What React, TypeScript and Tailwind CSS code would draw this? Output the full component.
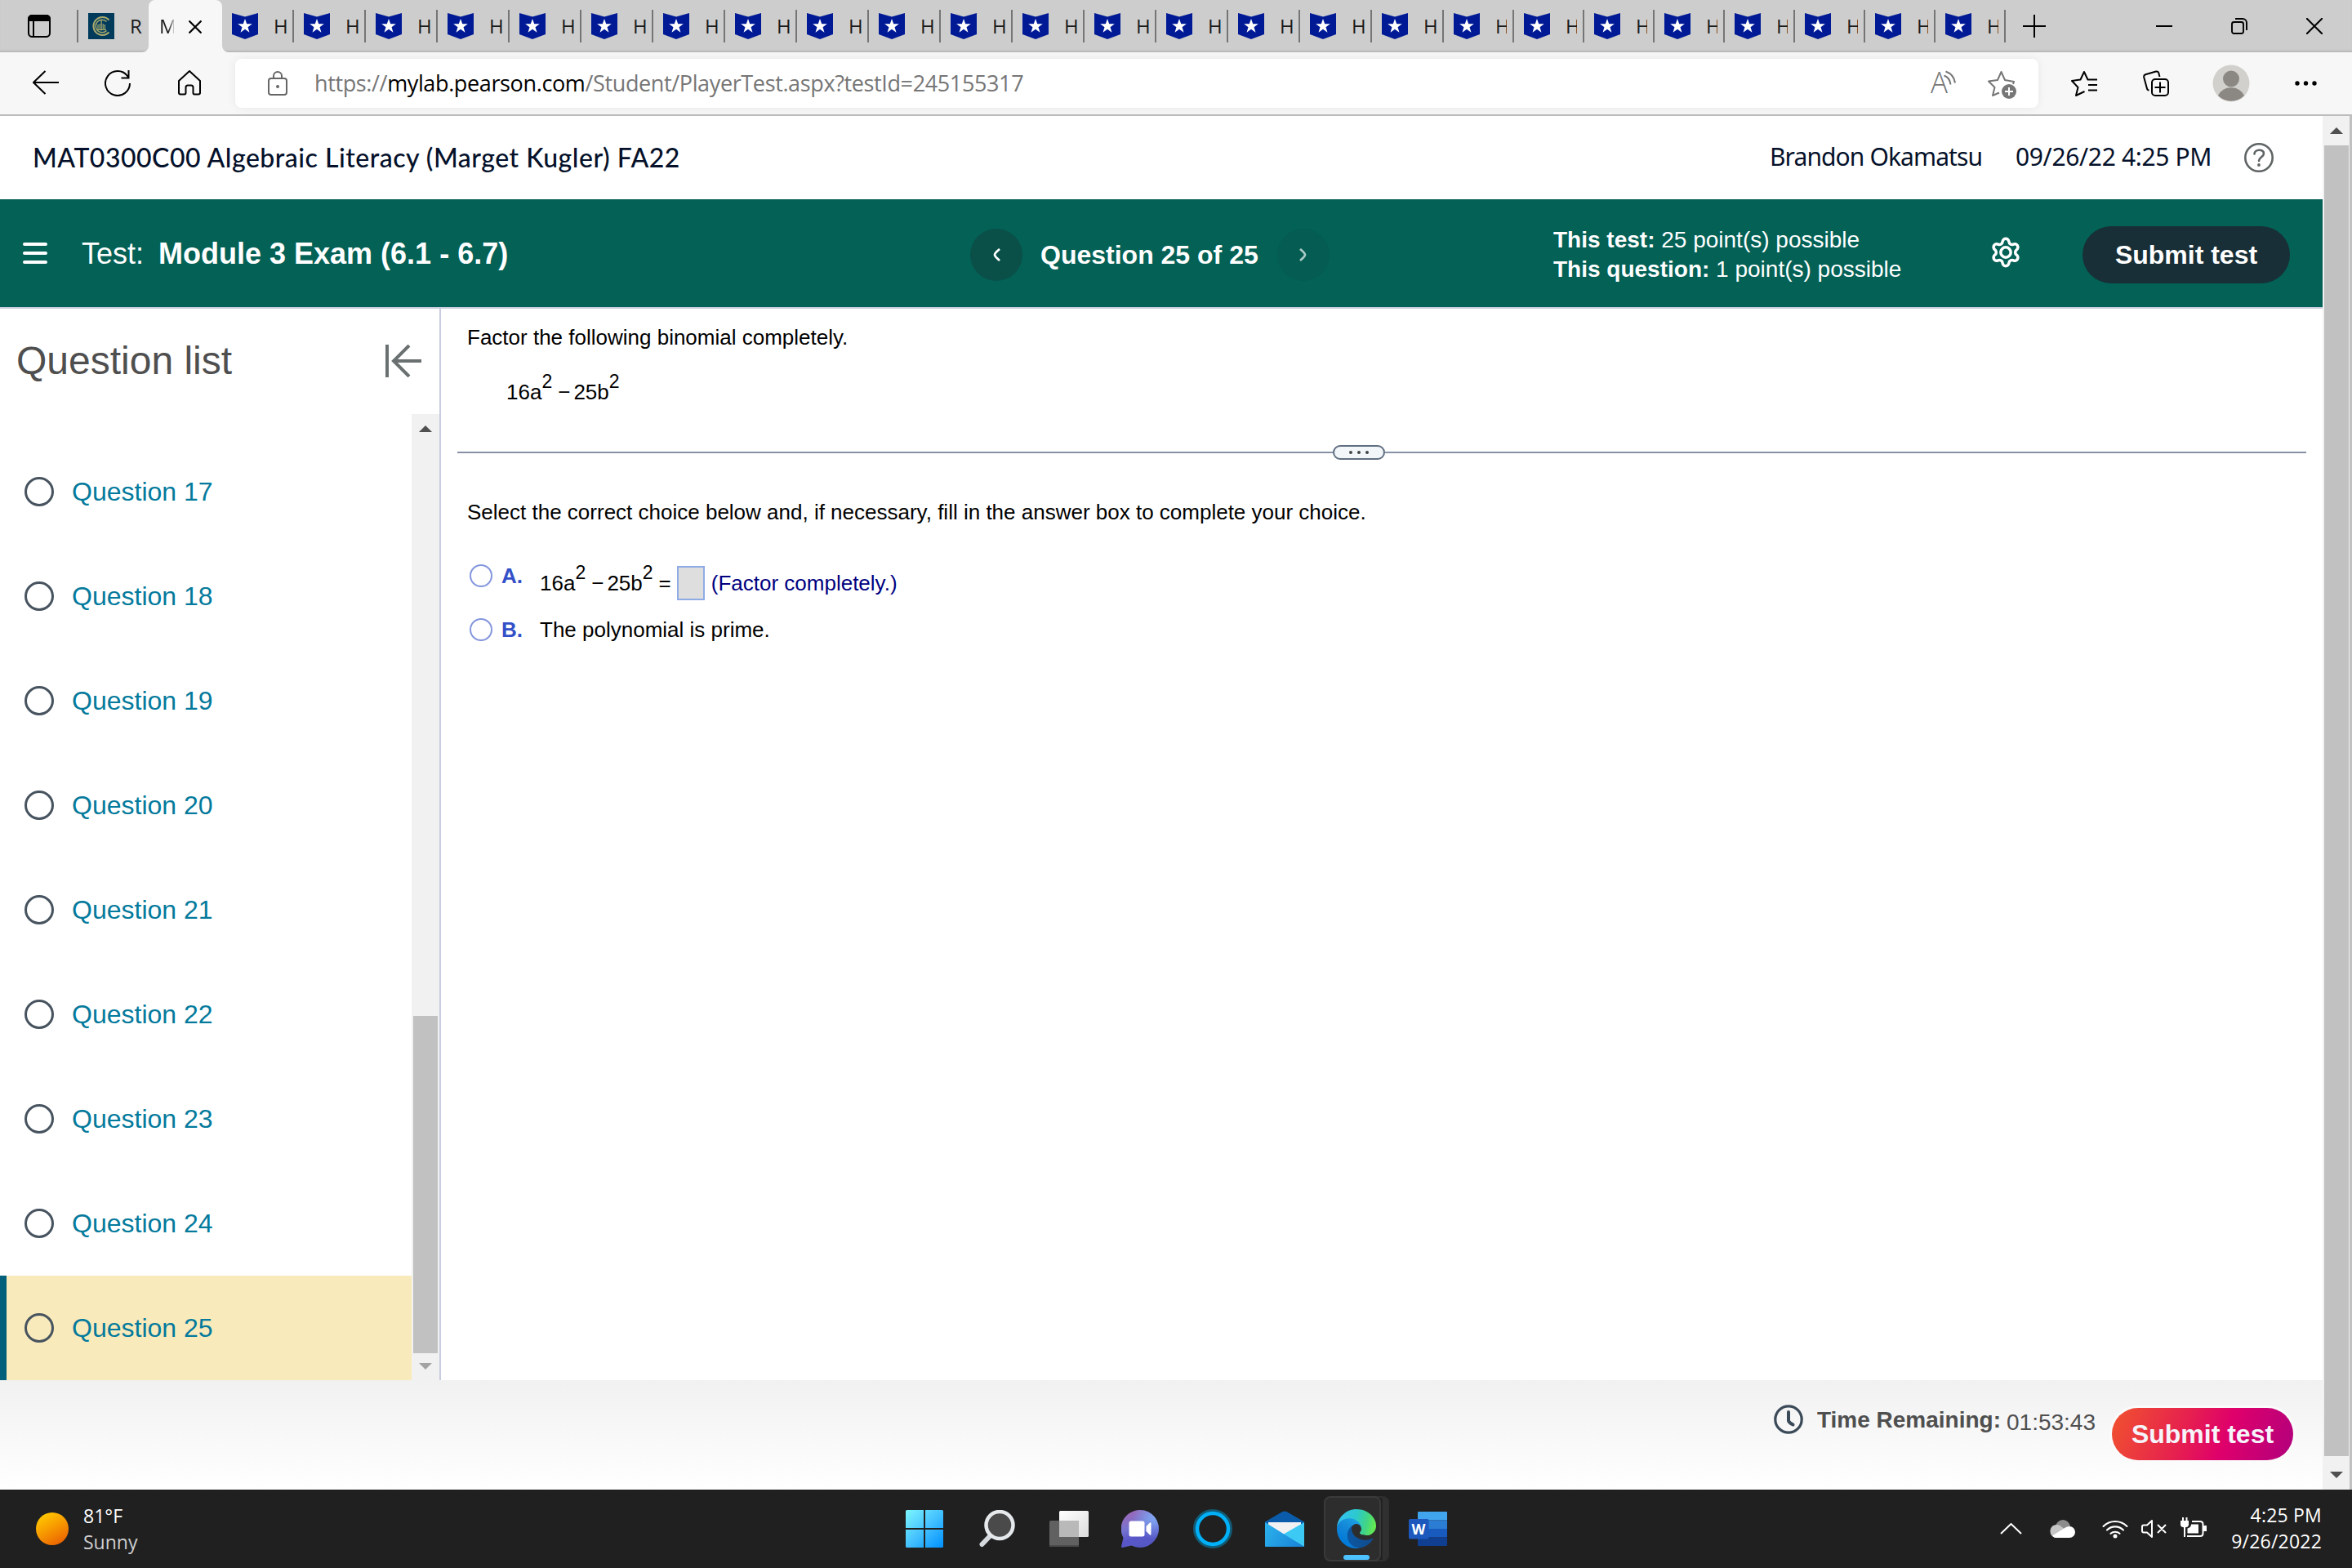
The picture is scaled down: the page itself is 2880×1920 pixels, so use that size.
import type { ReactNode } from 'react'
import { clsx } from 'clsx'

const wideTabs = Array.from({ length: 17 }, (_, i) => i)
const narrowTabs = Array.from({ length: 8 }, (_, i) => i)
const questions = [17, 18, 19, 20, 21, 22, 23, 24, 25]
const currentQuestion = 25

function HomeworkIcon() {
  return (
    <svg className="h-8 w-8 shrink-0" viewBox="0 0 32 32">
      <path d="M0 0L16 4.5L32 0V26L16 32L0 26Z" fill="#001a96" />
      <path
        d="M16 7l2.2 6.2h6.6l-5.3 4 2 6.6-5.5-4-5.5 4 2-6.600-5.300-4h6.600z"
        fill="#fff"
      />
    </svg>
  )
}

function HomeworkTab({ narrow = false }: { narrow?: boolean }) {
  return (
    <div className={clsx('flex h-full items-center pl-3', narrow ? 'w-[86px]' : 'w-[88px]')}>
      <HomeworkIcon />
      <span
        className={clsx(
          'ml-[19px] overflow-hidden font-["Open_Sans",sans-serif] text-[24px] leading-8 text-[#1b1b1b]',
          narrow ? 'w-[14px]' : 'w-[16px]',
        )}
      >
        H
      </span>
      <span className="ml-auto h-10 w-0.5 bg-[#757575]" />
    </div>
  )
}

function CollegeIcon() {
  return (
    <svg className="ml-3 h-8 w-8 shrink-0" viewBox="0 0 32 32">
      <rect width="32" height="32" fill="#003b5c" />
      <g fill="none" stroke="#a8a96d">
        <path d="M25.500 8.500A11 11 0 1 0 25.500 23.500" strokeWidth="2" />
        <path d="M22.500 10.500A7.800 7.800 0 1 0 22.500 21.500" strokeWidth="1.500" />
        <path d="M12 20v-6M14.200 21v-8M16.200 21.500V9M18.200 21v-8M20.400 20v-6M11 20.500h11" strokeWidth="1.200" />
      </g>
    </svg>
  )
}

function TabStrip() {
  return (
    <div className="flex h-16 bg-[#cdcdcd] shadow-[inset_0_-3px_3px_-2px_#a9a9a9]">
      <div className="flex h-full w-[96px] items-center pl-[34px]">
        <svg className="h-7 w-7" viewBox="0 0 28 28">
          <rect x="1" y="1" width="26" height="26" rx="4.5" fill="none" stroke="#000" strokeWidth="2" />
          <path d="M0 8V5a5 5 0 0 1 5-5h18a5 5 0 0 1 5 5v3z" />
          <path d="M7 8v19" stroke="#000" strokeWidth="2" />
        </svg>
        <span className="ml-auto h-10 w-0.5 bg-[#757575]" />
      </div>
      <div className="flex h-full w-[86px] items-center">
        <CollegeIcon />
        <span className="ml-[19px] font-['Open_Sans',sans-serif] text-[24px] leading-8 text-[#1b1b1b]">R</span>
      </div>
      <div className="relative flex h-full w-[90px] items-center">
        <svg className="absolute -left-2 top-0 h-16 w-[106px]" viewBox="0 0 106 64">
          <path d="M0 64a8 8 0 0 0 8-8V8a8 8 0 0 1 8-8h74a8 8 0 0 1 8 8v48a8 8 0 0 0 8 8z" fill="#f7f7f7" />
        </svg>
        <span className="relative ml-[13px] w-[18px] overflow-hidden bg-linear-to-r from-[#1b1b1b] from-60% to-[#bbb] bg-clip-text font-['Open_Sans',sans-serif] text-[24px] leading-8 text-transparent">
          M
        </span>
        <svg className="relative ml-[18px] mt-0.5 h-4 w-4" viewBox="0 0 16 16">
          <path d="M.5.5l15 15M15.500.5l-15 15" stroke="#000" strokeWidth="2.200" />
        </svg>
      </div>
      {wideTabs.map((i) => (
        <HomeworkTab key={i} />
      ))}
      {narrowTabs.map((i) => (
        <HomeworkTab key={i} narrow />
      ))}
      <div className="flex h-full flex-1 items-center pl-[21px]">
        <svg className="h-7 w-7" viewBox="0 0 28 28">
          <path d="M14 0v28M0 14h28" stroke="#000" strokeWidth="2" />
        </svg>
        <svg className="ml-[135px] h-5 w-5" viewBox="0 0 20 20">
          <path d="M0 10h20" stroke="#000" strokeWidth="2" />
        </svg>
        <svg className="ml-[72px] h-5 w-5" viewBox="0 0 20 20" fill="none" stroke="#000" strokeWidth="1.900">
          <rect x="1" y="5" width="14" height="14" rx="2.500" />
          <path d="M5 1h9a5 5 0 0 1 5 5v9" />
        </svg>
        <svg className="ml-[72px] h-5 w-5" viewBox="0 0 20 20">
          <path d="M0 0l20 20M20 0L0 20" stroke="#000" strokeWidth="2" />
        </svg>
      </div>
    </div>
  )
}

function Toolbar() {
  return (
    <div className="flex h-[78px] items-center border-b-2 border-[#bcbcbc] bg-[#f7f7f7]">
      <svg className="ml-10 h-8 w-8" viewBox="0 0 32 32" fill="none" stroke="#000" strokeWidth="2">
        <path d="M32 15H1M15.500 1L1 15l14.500 14" />
      </svg>
      <svg className="ml-14 h-8 w-8" viewBox="0 0 32 32" fill="none" stroke="#000" strokeWidth="2">
        <path d="M31 16a15 15 0 1 1-3-9l1.500 2.500M29.500 0v9.500H20.500" />
      </svg>
      <svg className="ml-[58px] h-8 w-7" viewBox="0 0 28 32" fill="none" stroke="#000" strokeWidth="2" strokeLinejoin="round">
        <path d="M1 13L14 1l13 12v14.500q0 2-2 2h-5q-1.500 0-1.500-2V21q0-2.500-2.500-2.500h-4q-2.500 0-2.500 2.500v6.500q0 2-1.500 2H3q-2 0-2-2z" />
      </svg>
      <div className="ml-[42px] flex h-[60px] w-[2208px] items-center rounded-lg bg-white shadow-[0_0_12px_rgba(0,0,0,0.07)]">
        <svg className="ml-10 h-[30px] w-6" viewBox="0 0 24 30" fill="none" stroke="#666" strokeWidth="2">
          <rect x="1" y="9" width="22" height="20" rx="3" />
          <path d="M7 9V6a5 5 0 0 1 10 0v3" />
          <circle cx="12" cy="19" r="2" fill="#666" stroke="none" />
        </svg>
        <span className="ml-[33px] whitespace-pre font-['Open_Sans',sans-serif] text-[27px] leading-10 tracking-[-0.37px] text-[#767676]">
          https://<span className="text-black">mylab.pearson.com</span>/Student/PlayerTest.aspx?testId=245155317
        </span>
        <svg className="ml-auto h-8 w-8" viewBox="0 0 32 32" fill="none" stroke="#767676" strokeWidth="2">
          <text x="0" y="28" fontSize="36" textLength="21" lengthAdjust="spacingAndGlyphs" fill="#767676" stroke="none" className="font-['Open_Sans',sans-serif] font-light">
            A
          </text>
          <path d="M16.500 6.500Q23.500 9 24.500 17.500M18.500 1.500Q28.500 5 30 15.500" />
        </svg>
        <svg className="ml-[38px] mr-[26px] mt-1 h-9 w-9" viewBox="0 0 36 36" fill="none" stroke="#767676" strokeWidth="2" strokeLinejoin="round">
          <path d="M31 17l1-3-11-2L16.500 2 12 12 1 13.500 8.500 21 6 31l8-3.500" />
          <circle cx="26" cy="26" r="9" fill="#767676" stroke="none" />
          <path d="M26 21v10M21 26h10" stroke="#fff" />
        </svg>
      </div>
      <svg className="ml-10 h-8 w-8" viewBox="0 0 32 32" fill="none" stroke="#000" strokeWidth="2" strokeLinejoin="round">
        <path d="M32 11.500H20.500L16 2l-4.500 9.500L1 13l7.500 8L6 31l10.500-5M21 18h11M21 24.500h11" />
      </svg>
      <svg className="ml-14 h-8 w-8" viewBox="0 0 32 32" fill="none" stroke="#000" strokeWidth="2">
        <rect x="11" y="11" width="20" height="20" rx="4" />
        <path d="M21 14.500v13M14.500 21h13M7.500 24.500q-2 0-2.500-2L1.200 8.500Q.8 6 3 5.200L16 1.500q2.500-.5 3.200 1.500L20.500 8" />
      </svg>
      <svg className="ml-[53px] h-[46px] w-[46px]" viewBox="0 0 46 46">
        <circle cx="23" cy="23" r="22.500" fill="#d2d0cc" />
        <circle cx="23" cy="17.500" r="10" fill="#8b8782" />
        <path d="M7 38a18 18 0 0 1 32 0 22.500 22.500 0 0 1-32 0z" fill="#8b8782" />
      </svg>
      <svg className="ml-[55px] h-2 w-7" viewBox="0 0 28 8">
        <circle cx="3" cy="4" r="2.700" />
        <circle cx="13.500" cy="4" r="2.700" />
        <circle cx="24" cy="4" r="2.700" />
      </svg>
    </div>
  )
}

function CourseHeader() {
  return (
    <div className="flex h-[102px] items-center bg-white pl-10 text-[#05112a]">
      <span className="whitespace-nowrap font-[Lato,sans-serif] text-[32px] font-medium leading-10 tracking-[0.5px]">
        MAT0300C00 Algebraic Literacy (Marget Kugler) FA22
      </span>
      <div className="ml-auto flex items-center whitespace-nowrap pb-0.5 font-['Noto_Sans',sans-serif] text-[30px] leading-10">
        <span className="w-[301px] tracking-[-0.9px]">Brandon Okamatsu</span>
        <span className="w-[280px] tracking-[-0.35px]">09/26/22 4:25 PM</span>
      </div>
      <svg className="mr-[60px] h-9 w-9" viewBox="0 0 36 36" fill="none" stroke="#5f6464" strokeWidth="2.600">
        <circle cx="18" cy="18" r="16.700" />
        <path d="M12.500 13.500c0-6 11.500-6.500 11.500-.5 0 4-6 4.500-6 9" strokeLinecap="round" />
        <circle cx="18" cy="27" r="1.900" fill="#5f6464" stroke="none" />
      </svg>
    </div>
  )
}

function TestBar() {
  return (
    <div className="flex h-[134px] items-center border-b-2 border-[#c9cede] bg-[#036156] text-white">
      <div className="flex w-[1188px] items-center pt-0.5">
        <div className="ml-7 flex w-[30px] flex-col gap-[7px] pb-0.5">
          <span className="h-1 rounded-full bg-white" />
          <span className="h-1 rounded-full bg-white" />
          <span className="h-1 rounded-full bg-white" />
        </div>
        <span className="ml-[42px] text-[36px] leading-10">Test:</span>
        <span className="ml-[18px] whitespace-nowrap text-[36px] font-bold leading-10">Module 3 Exam (6.1 - 6.7)</span>
      </div>
      <div className="mt-1 flex items-center">
        <span className="flex h-16 w-16 items-center justify-center rounded-full bg-[#0a5049]">
          <svg className="h-4 w-[9px]" viewBox="0 0 9 16" fill="none" stroke="#fff" strokeWidth="2.800">
            <path d="M8 1Q2 6 2 8t6 7" />
          </svg>
        </span>
        <span className="ml-[22px] w-[290px] whitespace-nowrap text-[32px] font-bold leading-10">Question 25 of 25</span>
        <span className="flex h-16 w-16 items-center justify-center rounded-full bg-[#045c52] pr-0.5">
          <svg className="h-4 w-[9px]" viewBox="0 0 9 16" fill="none" stroke="#a9c9c5" strokeWidth="2.800">
            <path d="M1 1q6 5 6 7t-6 7" />
          </svg>
        </span>
      </div>
      <div className="ml-[274px] mt-[3px] w-[534px] text-[28px] leading-9">
        <p>
          <b>This test:</b> 25 point(s) possible
        </p>
        <p>
          <b>This question:</b> 1 point(s) possible
        </p>
      </div>
      <svg className="mb-0.5 h-10 w-10" viewBox="0 0 24 24" fill="none" stroke="#fff" strokeWidth="2.100">
        <path d="M9.671 4.136a2.340 2.340 0 0 1 4.659 0 2.340 2.340 0 0 0 3.319 1.915 2.340 2.340 0 0 1 2.330 4.033 2.340 2.340 0 0 0 0 3.831 2.340 2.340 0 0 1-2.330 4.033 2.340 2.340 0 0 0-3.319 1.915 2.340 2.340 0 0 1-4.659 0 2.340 2.340 0 0 0-3.320-1.915 2.340 2.340 0 0 1-2.330-4.033 2.340 2.340 0 0 0 0-3.831A2.340 2.340 0 0 1 6.350 6.051a2.340 2.340 0 0 0 3.319-1.915" />
        <circle cx="12" cy="12" r="3.700" />
      </svg>
      <button className="ml-[74px] mt-1 h-[70px] w-[254px] rounded-full bg-[#182f37] text-[32px] font-bold leading-10">
        Submit test
      </button>
    </div>
  )
}

function ArrowHead({ down = false, muted = false }: { down?: boolean; muted?: boolean }) {
  return (
    <svg className="h-2 w-4" viewBox="0 0 16 8">
      <path d={down ? 'M0 0h16L8 8z' : 'M0 8h16L8 0z'} fill={muted ? '#a3a3a3' : '#505050'} />
    </svg>
  )
}

function Sidebar() {
  return (
    <aside className="flex w-[540px] flex-col border-r-2 border-[#c8cce0]">
      <div className="flex h-[129px] items-center pb-0.5 pl-5">
        <h2 className="text-[48px] leading-[56px] text-[#4f4f4f]">Question list</h2>
        <svg className="ml-auto mr-[22px] h-10 w-11" viewBox="0 0 44 40" fill="none" stroke="#6a7070" strokeWidth="4">
          <path d="M2 0v40M44 20H10M29 1L10 20l19 19" />
        </svg>
      </div>
      <div className="flex flex-1">
        <div className="flex-1 pt-[31px]">
          {questions.map((q) => (
            <div
              key={q}
              className={clsx(
                'flex h-32 items-center border-l-8 pl-[22px]',
                q === currentQuestion ? 'border-[#005f7a] bg-[#f9eabb]' : 'border-transparent',
              )}
            >
              <span className="h-9 w-9 rounded-full border-[3.500px] border-[#47535f]" />
              <a className="ml-[22px] text-[32px] leading-10 text-[#047a9c]">Question {q}</a>
            </div>
          ))}
        </div>
        <div className="flex w-[34px] flex-col items-center bg-[#f1f1f1] pt-[14px] pb-[13px]">
          <ArrowHead />
          <span className="mt-auto h-[413px] w-[30px] bg-[#c1c1c1]" />
          <span className="mt-3 flex">
            <ArrowHead down muted />
          </span>
        </div>
      </div>
    </aside>
  )
}

function Sup({ children }: { children: ReactNode }) {
  return <span className="align-[14px] text-[23px] leading-[0]">{children}</span>
}

function Binomial() {
  return (
    <span className="whitespace-nowrap">
      16a<Sup>2</Sup>
      <span className="ml-[7px] mr-[4px]">−</span>
      25b<Sup>2</Sup>
    </span>
  )
}

function Choice({ letter, children }: { letter: string; children: ReactNode }) {
  return (
    <div className="flex items-start">
      <span className="mt-0.5 h-7 w-7 rounded-full border-[2.500px] border-[#8496dd]" />
      <b className="ml-[11px] w-[47px] leading-8 text-[#3350c8]">{letter}.</b>
      {children}
    </div>
  )
}

function QuestionPanel() {
  return (
    <main className="flex flex-1 flex-col pt-[19px] text-[26px] leading-8 text-black">
      <p className="ml-8">Factor the following binomial completely.</p>
      <p className="ml-[80px] mt-[35px]">
        <Binomial />
      </p>
      <div className="ml-5 mr-5 mt-[49px] flex h-[18px] items-center">
        <span className="h-0.5 w-[1072px] bg-[#8691a6]" />
        <span className="flex h-[18px] w-16 items-center justify-center gap-1.5 rounded-full border-2 border-[#5f6e7f] bg-[#f3f6f9]">
          <span className="h-1 w-1 rounded-full bg-[#444]" />
          <span className="h-1 w-1 rounded-full bg-[#444]" />
          <span className="h-1 w-1 rounded-full bg-[#444]" />
        </span>
        <span className="h-0.5 flex-1 bg-[#8691a6]" />
      </div>
      <p className="ml-8 mt-[48px]">
        Select the correct choice below and, if necessary, fill in the answer box to complete your choice.
      </p>
      <div className="ml-[35px] mt-[46px] h-[66px]">
        <Choice letter="A">
          <div className="mt-[9px] flex h-8 items-center">
            <Binomial />
            <span className="ml-[7px]">=</span>
            <span className="ml-[7px] h-[42px] w-[34px] border-2 border-[#8fabe6] bg-[#dedede]" />
            <span className="ml-[8px] text-[#00007f]">(Factor completely.)</span>
          </div>
        </Choice>
      </div>
      <div className="ml-[35px]">
        <Choice letter="B">
          <span>The polynomial is prime.</span>
        </Choice>
      </div>
    </main>
  )
}

function TestFooter() {
  return (
    <footer className="flex h-[134px] items-start justify-end bg-linear-to-b from-[#f1f1f1] to-white pr-9 text-[28px] leading-8 text-[#4f4f4f]">
      <svg className="mt-[30px] h-9 w-9" viewBox="0 0 36 36" fill="none" stroke="#3b4a58" strokeWidth="3.200">
        <circle cx="18" cy="18" r="16.200" />
        <path d="M18 9v10.500q.5 2.500 5.500 5" strokeWidth="4" strokeLinecap="round" />
      </svg>
      <b className="ml-[17px] mt-[33px]">Time Remaining:</b>
      <span className="ml-[7px] mt-[36px]">01:53:43</span>
      <button className="ml-5 mt-[34px] h-16 w-[222px] rounded-full bg-linear-[110deg,#f05030_2%,#e6204f_40%,#df006b_62%,#b3007c_98%] text-[32px] font-bold leading-10 text-[#f6f4fb] shadow-[0_0_0_3px_#fbfbfb]">
        Submit test
      </button>
    </footer>
  )
}

function PageScrollbar() {
  return (
    <div className="flex w-9 flex-col items-center border-r-[3px] border-[#c0c0c0] bg-[#f1f1f1] pt-[14px] pb-[14px]">
      <ArrowHead />
      <span className="mt-[14px] h-[1605px] w-[30px] bg-[#c1c1c1]" />
      <span className="mt-auto flex">
        <ArrowHead down />
      </span>
    </div>
  )
}

function EdgeLogo() {
  return (
    <svg className="h-12 w-12" viewBox="0 0 256 256">
      <defs>
        <linearGradient id="edgeDark" x1="58" y1="177" x2="237" y2="177" gradientUnits="userSpaceOnUse">
          <stop offset="0" stopColor="#0c59a4" />
          <stop offset="1" stopColor="#114a8b" />
        </linearGradient>
        <linearGradient id="edgeBlue" x1="140" y1="90" x2="50" y2="230" gradientUnits="userSpaceOnUse">
          <stop offset="0" stopColor="#1b9de2" />
          <stop offset=".4" stopColor="#1488d8" />
          <stop offset="1" stopColor="#0078d7" />
        </linearGradient>
        <linearGradient id="edgeGreen" x1="10" y1="60" x2="250" y2="110" gradientUnits="userSpaceOnUse">
          <stop offset="0" stopColor="#35c1f1" />
          <stop offset=".45" stopColor="#2cc9cf" />
          <stop offset=".75" stopColor="#40d486" />
          <stop offset="1" stopColor="#66eb4f" />
        </linearGradient>
      </defs>
      <path
        fill="url(#edgeDark)"
        d="M231 190.500c-3.400 1.800-6.900 3.400-10.500 4.700a101.500 101.500 0 0 1-35.900 6.400c-47.300 0-88.500-32.500-88.500-74.300.1-11.400 6.300-21.900 16.200-27.300-42.800 1.800-53.800 46.400-53.800 72.500 0 73.900 68.100 81.400 82.800 81.400 7.900 0 19.800-2.300 27-4.600l1.300-.4a128.300 128.300 0 0 0 66.600-52.800c1.200-1.900.6-4.300-1.200-5.500-1.300-.8-2.800-.8-4-.1z"
      />
      <path
        fill="url(#edgeBlue)"
        d="M105.700 241.400c-8.900-5.500-16.600-12.800-22.700-21.300-26.300-36-18.400-86.500 17.600-112.800 3.800-2.700 7.700-5.200 11.900-7.200 3.100-1.500 8.400-4.100 15.500-4 10.100.1 19.600 4.900 25.700 13 4 5.400 6.300 11.900 6.400 18.700 0-.2 24.500-79.600-80-79.600-43.900 0-80 41.700-80 78.200-.2 19.300 4 38.500 12.100 56 27.600 58.800 94.800 87.600 156.400 67.100-21.100 6.600-44.100 3.700-62.900-8.100z"
      />
      <path
        fill="url(#edgeGreen)"
        d="M152.300 148.900c-.8 1-3.300 2.500-3.300 5.700 0 2.600 1.700 5.100 4.700 7.200 14.400 10 41.500 8.700 41.600 8.700 10.700 0 21.100-2.900 30.300-8.300 18.800-11 30.400-31.100 30.400-52.900.3-22.400-8-37.300-11.300-43.900C223.500 23.900 177.700 0 128 0 58 0 1 56.200 0 126.200c.5-36.500 36.800-66 80-66 3.500 0 23.500.3 42 10.100 16.300 8.600 24.900 18.900 30.800 29.200 6.200 10.700 7.300 24.100 7.300 29.500 0 5.300-2.700 13.300-7.800 19.900z"
      />
    </svg>
  )
}

function TaskbarApps() {
  return (
    <div className="flex w-[680px] items-center">
      <svg className="h-[46px] w-[46px]" viewBox="0 0 46 46">
        <defs>
          <linearGradient id="win" x1="0" y1="0" x2="46" y2="46" gradientUnits="userSpaceOnUse">
            <stop offset="0" stopColor="#7df6ff" />
            <stop offset=".5" stopColor="#45c2ff" />
            <stop offset="1" stopColor="#0090ff" />
          </linearGradient>
        </defs>
        <path fill="url(#win)" d="M1.500 0H22v22H0V1.500A1.500 1.500 0 0 1 1.500 0zM24 0h20.500A1.500 1.500 0 0 1 46 1.500V22H24zM0 24h22v22H1.500A1.500 1.500 0 0 1 0 44.500zM24 24h22v20.500a1.500 1.500 0 0 1-1.500 1.500H24z" />
      </svg>
      <svg className="ml-[44px] h-[46px] w-[44px]" viewBox="0 0 44 46">
        <path d="M14 31L3.500 42" stroke="#d5d9dd" strokeWidth="6" strokeLinecap="round" />
        <circle cx="25" cy="18.500" r="16.500" fill="#4a4a4a" stroke="#e6e9ec" strokeWidth="4.500" />
      </svg>
      <svg className="ml-[42px] h-[44px] w-12" viewBox="0 0 48 44">
        <defs>
          <linearGradient id="desk" x1="0" y1="0" x2="1" y2="1">
            <stop offset="0" stopColor="#fff" />
            <stop offset="1" stopColor="#dcdcdc" />
          </linearGradient>
        </defs>
        <rect x="12" y="0" width="36" height="32" rx="1.500" fill="url(#desk)" />
        <rect x="0" y="12" width="36" height="32" rx="1.500" fill="#616161" />
        <path d="M12 12h24v20H12z" fill="#b9b9b9" />
        <path d="M0 42h36v.5a1.500 1.500 0 0 1-1.500 1.500h-33A1.500 1.500 0 0 1 0 42.500z" fill="#4c4c4c" />
      </svg>
      <svg className="ml-[40px] h-[46px] w-[46px]" viewBox="0 0 46 46">
        <defs>
          <linearGradient id="chat" x1="8" y1="4" x2="24" y2="44" gradientUnits="userSpaceOnUse">
            <stop offset="0" stopColor="#9a68b8" />
            <stop offset=".4" stopColor="#7674cf" />
            <stop offset=".7" stopColor="#5a57c9" />
            <stop offset="1" stopColor="#5558c4" />
          </linearGradient>
          <radialGradient id="chatGlow" cx="40" cy="10" r="26" gradientUnits="userSpaceOnUse">
            <stop offset="0" stopColor="#7fa6f2" />
            <stop offset="1" stopColor="#7fa6f2" stopOpacity="0" />
          </radialGradient>
        </defs>
        <path d="M23 0a23 23 0 1 1-10.500 43.500L1.500 46Q-.5 46 .2 44L2.500 34A23 23 0 0 1 23 0z" fill="url(#chat)" />
        <path d="M23 0a23 23 0 1 1-10.500 43.500L1.500 46Q-.5 46 .2 44L2.500 34A23 23 0 0 1 23 0z" fill="url(#chatGlow)" />
        <rect x="9.500" y="13.500" width="19" height="19" rx="2.500" fill="#fff" />
        <path d="M30.500 20l4-4q2-1.500 2 .5v13q0 2-2 .5l-4-4z" fill="#fff" />
      </svg>
      <svg className="ml-[42px] h-12 w-12" viewBox="0 0 48 48" fill="none">
        <circle cx="24" cy="24" r="22.500" stroke="#135a74" strokeWidth="3" />
        <circle cx="24" cy="24" r="19" stroke="#00b0f8" strokeWidth="4.500" />
      </svg>
      <svg className="ml-[40px] h-[44px] w-12" viewBox="0 0 48 44">
        <defs>
          <linearGradient id="mail" x1="0" y1="20" x2="40" y2="44" gradientUnits="userSpaceOnUse">
            <stop offset="0" stopColor="#2ab0ec" />
            <stop offset="1" stopColor="#1a86d9" />
          </linearGradient>
        </defs>
        <path d="M0 13.500L21.500 1Q24 0 26.500 1L48 13.500V20H0z" fill="#0a5cab" />
        <path d="M4 14h40v8L24 34 4 22z" fill="#f1f1f3" />
        <path d="M48 14v30L22 29z" fill="#3ccaf5" />
        <path d="M0 14l48 30H1q-1 0-1-1z" fill="url(#mail)" />
      </svg>
      <div className="ml-[24px] flex w-20">
        <div className="relative z-10 flex h-20 w-[70px] flex-col items-center rounded-[8px] border-2 border-[#3a3a3a] bg-[#2d2d2d] pl-[10px] pt-[14px]">
          <EdgeLogo />
          <span className="mt-[8px] h-1.5 w-8 rounded-full bg-[#4cc2ff]" />
        </div>
        <div className="-ml-[10px] h-20 w-5 rounded-r-[8px] border-2 border-l-0 border-[#2f2f2f] bg-linear-to-r from-[#202020] from-60% to-[#303030] to-70%" />
      </div>
      <svg className="ml-[24px] h-[42px] w-[47px]" viewBox="0 0 47 42">
        <path d="M11 10.500V1q0-1 1-1h34q1 0 1 1v9.500z" fill="#41a5ee" />
        <path d="M11 10.500h36V21H11z" fill="#2b7cd3" />
        <path d="M11 21h36v10.500H11z" fill="#185abd" />
        <path d="M11 31.500h36V41q0 1-1 1H12q-1 0-1-1z" fill="#103f91" />
        <rect x="0" y="9" width="24.500" height="24.500" rx="1.800" fill="#1d58bd" />
        <text x="12" y="27.500" textAnchor="middle" fontSize="17.500" fontWeight="700" fill="#fff" className="font-['Open_Sans',sans-serif]">
          W
        </text>
      </svg>
    </div>
  )
}

function SystemTray() {
  return (
    <div className="flex items-center">
      <svg className="h-[14px] w-[27px]" viewBox="0 0 27 14" fill="none" stroke="#fff" strokeWidth="2">
        <path d="M1 13L13.500 1 26 13" />
      </svg>
      <svg className="ml-[34px] h-[22px] w-8" viewBox="0 0 32 22">
        <circle cx="16" cy="9" r="9" fill="#8c8c8c" />
        <path d="M7 22a7.500 8 0 1 1 2-16q3 0 6 3l6 5-11 8z" fill="#c6c6c6" />
        <path d="M3 19.500L19 9.500q2-1.500 5-1.500a7 7 0 1 1 0 14H8q-3 0-5-2.500z" fill="#fff" />
      </svg>
      <svg className="ml-8 h-6 w-8" viewBox="0 0 32 24" fill="none" stroke="#fff" strokeWidth="2.100" strokeLinecap="round">
        <path d="M1.500 9a20.500 20.500 0 0 1 29 0M6 13.500a14.300 14.300 0 0 1 20 0M10.500 17.800a8.200 8.200 0 0 1 11 0" />
        <circle cx="16" cy="21" r="2.500" fill="#fff" stroke="none" />
      </svg>
      <svg className="ml-4 h-6 w-[31px]" viewBox="0 0 31 24" fill="none" stroke="#fff" strokeWidth="2" strokeLinejoin="round">
        <path d="M13 2v20l-6-5.500H3q-2 0-2-2V9.500q0-2 2-2h4zM20 7l10 10M30 7L20 17" />
      </svg>
      <svg className="mb-1 ml-[17px] h-6 w-8" viewBox="0 0 32 24" fill="none" stroke="#fff" strokeWidth="2">
        <path d="M14 5h10q3.500 0 3.500 3.500v11Q27.500 23 24 23H8M5 10v14" />
        <path d="M0 4h10v5q0 3-5 3.500Q0 12 0 9zM13 8.500h9v11H8.500v-6q4.500-1 4.500-5zM28 10h4v7h-4z" fill="#fff" stroke="none" />
        <path d="M3 0v5M7.500 0v5" />
      </svg>
    </div>
  )
}

function Taskbar() {
  return (
    <div className="flex h-24 items-center bg-[#202020] font-['Open_Sans',sans-serif] text-[23px] leading-8 text-white">
      <div className="flex w-[1109px] items-center pl-11">
        <span className="h-10 w-10 rounded-full bg-linear-150 from-[#ffd500] to-[#e65100]" />
        <div className="ml-[18px]">
          <p>81°F</p>
          <p className="text-[#cfcfcf]">Sunny</p>
        </div>
      </div>
      <TaskbarApps />
      <div className="ml-auto flex items-center pr-[37px]">
        <SystemTray />
        <div className="ml-[28px] w-[113px] whitespace-nowrap pb-0.5 text-right">
          <p className="tracking-[0.2px]">4:25 PM</p>
          <p className="tracking-[0.2px]">9/26/2022</p>
        </div>
      </div>
    </div>
  )
}

export default function App() {
  return (
    <div className="flex h-[1920px] w-[2880px] flex-col overflow-hidden bg-white font-['Liberation_Sans',Arial,sans-serif]">
      <TabStrip />
      <Toolbar />
      <div className="flex h-[1682px]">
        <div className="flex w-[2844px] flex-col">
          <CourseHeader />
          <TestBar />
          <div className="flex h-[1312px]">
            <Sidebar />
            <QuestionPanel />
          </div>
          <TestFooter />
        </div>
        <PageScrollbar />
      </div>
      <Taskbar />
    </div>
  )
}
